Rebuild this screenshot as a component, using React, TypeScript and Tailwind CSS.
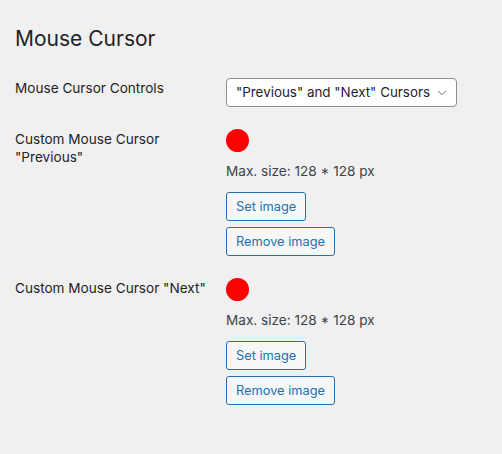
import { ChevronDown } from "lucide-react";

function ImageField() {
  return (
    <div className="flex flex-col items-start">
      <div className="w-[23px] h-[23px] rounded-full bg-[#ff0000]" />
      <p className="mt-[9px] text-[13.6px] leading-[20px] text-[#3c434a]">Max. size: 128 * 128 px</p>
      <button className="mt-[11px] h-[29px] px-[9px] rounded-[3px] border border-[#2271b1] bg-[#f6f7f7] text-[12.8px] text-[#2271b1]">
        Set image
      </button>
      <button className="mt-[6px] h-[29px] px-[9px] rounded-[3px] border border-[#2271b1] bg-[#f6f7f7] text-[12.8px] text-[#2271b1]">
        Remove image
      </button>
    </div>
  );
}

export default function App() {
  return (
    <main className="min-h-screen bg-[#f0f0f1] text-[#1d2327] px-[15px] pt-[24px] font-['Inter',sans-serif]">
      <h2 className="text-[21px] leading-[30px] font-normal">Mouse Cursor</h2>

      <div className="mt-[24px] flex">
        <div className="w-[211px] pt-[1px] text-[13.6px] leading-[18px]">Mouse Cursor Controls</div>
        <div className="h-[29px] w-[231px] flex items-center justify-between pl-[9px] pr-[7px] rounded-[4px] border border-[#8c8f94] bg-white text-[13.4px] whitespace-nowrap">
          <span>"Previous" and "Next" Cursors</span>
          <ChevronDown size={14} strokeWidth={1.5} className="text-[#50575e]" />
        </div>
      </div>

      <div className="mt-[22px] flex">
        <div className="w-[211px] pt-[1px] text-[13.6px] leading-[18px]">
          Custom Mouse Cursor
          <br />
          "Previous"
        </div>
        <ImageField />
      </div>

      <div className="mt-[22px] flex">
        <div className="w-[211px] pt-[1px] text-[13.6px] leading-[18px]">Custom Mouse Cursor "Next"</div>
        <ImageField />
      </div>
    </main>
  );
}
